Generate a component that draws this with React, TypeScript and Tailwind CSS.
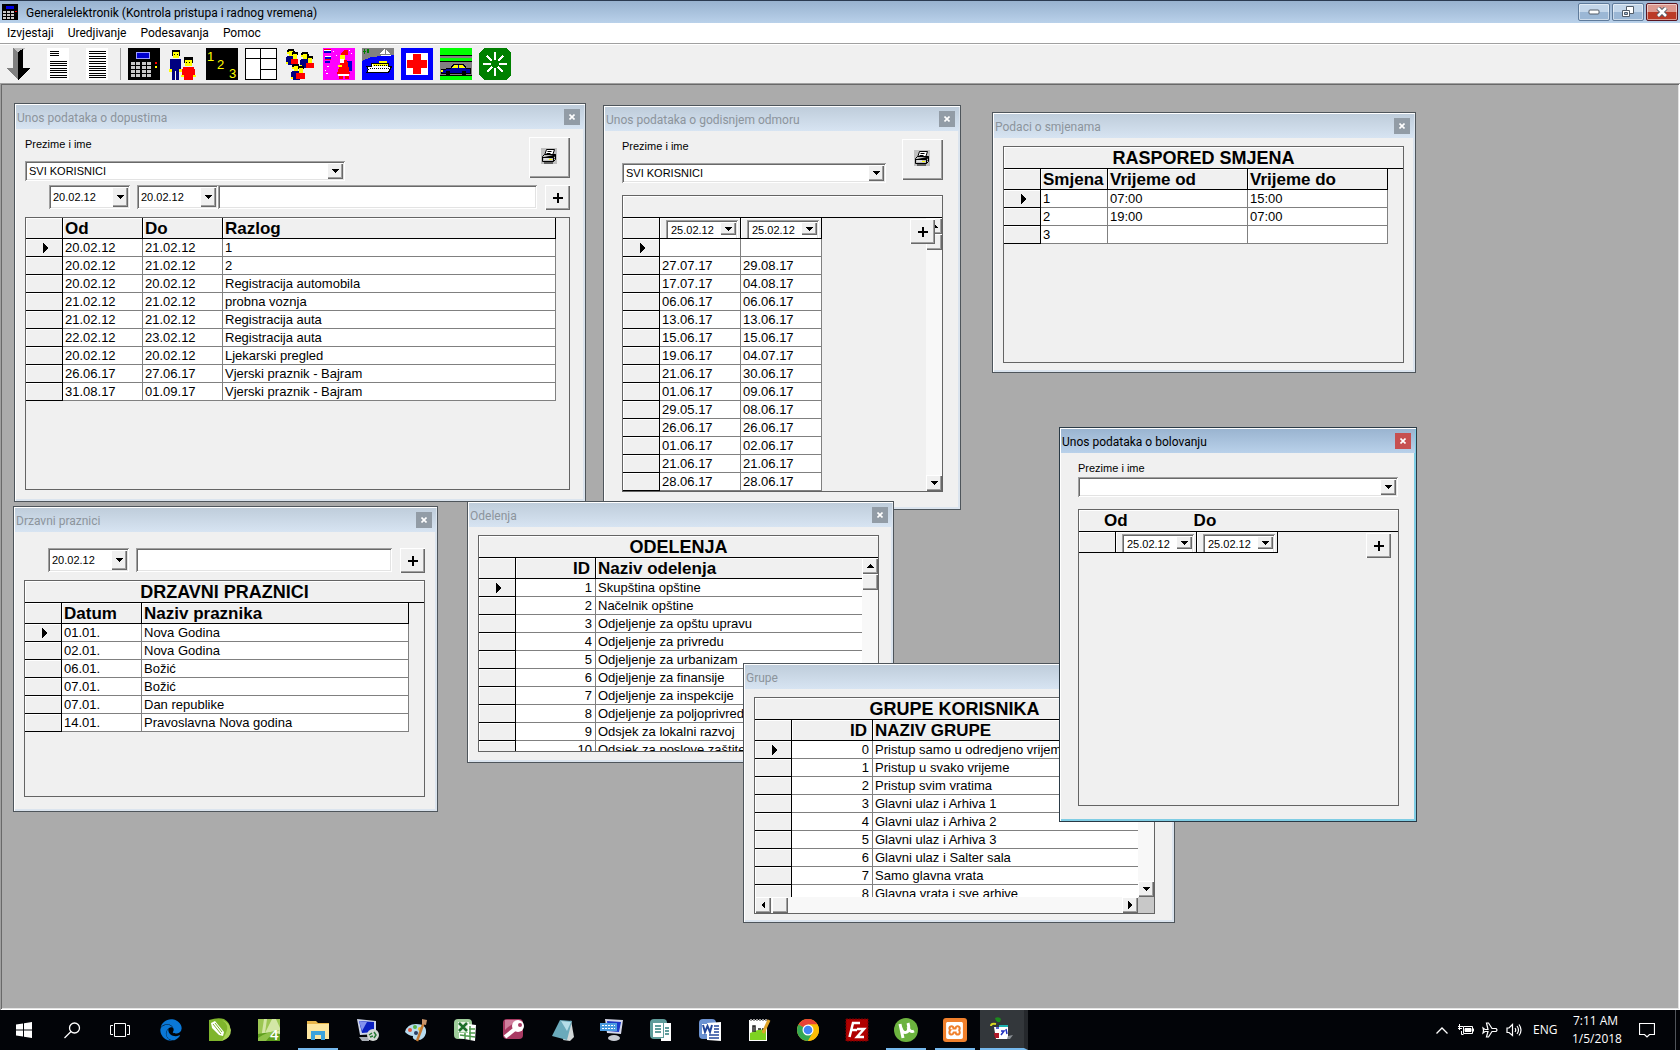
import React, { ReactNode } from "react";
import { FaEdge } from "react-icons/fa";
import { SiXampp } from "react-icons/si";

const sunken =
  "bg-white shadow-[inset_1px_1px_#a0a0a0,inset_-1px_-1px_#ffffff,inset_2px_2px_#696969,inset_-2px_-2px_#e3e3e3]";
const raised =
  "bg-[#f0f0f0] shadow-[inset_1px_1px_#ffffff,inset_-1px_-1px_#696969,inset_-2px_-2px_#a0a0a0]";

const Triangle = ({ dir }: { dir: "up" | "down" | "left" | "right" }) => {
  const points = {
    up: "0,4 7,4 3.5,0",
    down: "0,0 7,0 3.5,4",
    left: "4,0 4,8 0,4",
    right: "0,0 0,8 4,4",
  };
  const tall = dir === "left" || dir === "right";
  return (
    <svg
      width={tall ? 4 : 7}
      height={tall ? 8 : 4}
      shapeRendering="crispEdges"
      aria-hidden="true"
    >
      <polygon points={points[dir]} />
    </svg>
  );
};

type ComboProps = {
  label: string;
  value: string;
  id?: string;
  className?: string;
  small?: boolean;
};

const Combo = ({ label, value, id, className = "", small }: ComboProps) => (
  <div className={`relative flex shrink-0 p-0.5 ${sunken} ${className}`}>
    <select
      id={id}
      aria-label={id ? undefined : label}
      defaultValue={value}
      className={`w-full min-w-0 appearance-none bg-transparent text-[11px] leading-4 outline-none ${
        small ? "pl-[3px]" : "pl-0.5"
      }`}
    >
      <option>{value}</option>
    </select>
    <span
      className={`pointer-events-none absolute right-0.5 top-0.5 flex items-center justify-center ${raised} ${
        small ? "h-[13px] w-4" : "bottom-0.5 w-4"
      }`}
    >
      <Triangle dir="down" />
    </span>
  </div>
);

const PlusButton = ({ className = "" }: { className?: string }) => (
  <button
    type="button"
    aria-label="Dodaj"
    className={`flex size-[25px] shrink-0 items-center justify-center ${raised} ${className}`}
  >
    <svg width="12" height="12" shapeRendering="crispEdges">
      <path d="M5 1h2v10h-2zM1 5h10v2h-10z" />
    </svg>
  </button>
);

const PrintButton = () => (
  <button
    type="button"
    aria-label="Stampaj"
    className={`flex size-[41px] shrink-0 items-center justify-center pb-1 pr-0.5 ${raised}`}
  >
    <svg width="16" height="16" viewBox="0 0 16 16">
      <path fill="#c0c0c0" d="M0 0h16v16H0z" />
      <path fill="#fff" stroke="#000" d="M5.5 1.5h8l-2 6h-8z" />
      <path stroke="#000" d="M6.5 3.5h4M5.5 5.5h4" />
      <path fill="#c0c0c0" stroke="#000" d="M1.5 8.5l2-2h11v5l-2 2h-11z" />
      <path stroke="#000" d="M1.5 9.5h11l2-3M12.5 9.5v4M3 15h9M13.500 10.500l1.500 -1.500" />
      <path fill="#ff0" d="M8 11h3v1H8z" />
      <path fill="#fff" d="M3 10.500h5v1H3z" />
    </svg>
  </button>
);

const ScrollButton = ({ dir }: { dir: "up" | "down" | "left" | "right" }) => (
  <button
    type="button"
    tabIndex={-1}
    aria-label={`Scroll ${dir}`}
    className={`flex size-4 shrink-0 items-center justify-center ${raised}`}
  >
    <Triangle dir={dir} />
  </button>
);

type Column = { label: ReactNode; width: string; right?: boolean };

type DataGridProps = {
  name: string;
  title?: ReactNode;
  columns: Column[];
  rows: string[][];
  vScroll?: boolean;
  hScroll?: boolean;
};

const DataGrid = ({ name, title, columns, rows, vScroll, hScroll }: DataGridProps) => {
  const filled = columns[columns.length - 1].width !== "";
  return (
    <div className="flex min-h-0 flex-1 flex-col overflow-hidden border border-[#646464]">
      {title !== undefined && (
        <div className="h-[22px] shrink-0 border-b border-black text-center text-[18px] font-bold leading-[22px] shadow-[inset_1px_1px_#fff]">
          {title}
        </div>
      )}
      <div className="flex min-h-0 flex-1">
        <div className="min-w-0 flex-1 overflow-hidden">
          <table
            aria-label={name}
            className="w-full table-fixed border-separate border-spacing-0 whitespace-nowrap text-[13px]"
          >
            <thead>
              <tr className="h-[21px] text-[17px] leading-5">
                <td className="w-[37px] border-b border-r border-black p-0 shadow-[inset_1px_1px_#fff]" />
                {columns.map((col, i) => (
                  <th
                    key={i}
                    className={`overflow-hidden border-b border-black p-0 font-bold shadow-[inset_1px_1px_#fff] ${
                      col.width
                    } ${col.width ? "border-r" : ""} ${
                      col.right ? "pr-[5px] text-right" : "pl-0.5 text-left"
                    }`}
                  >
                    {typeof col.label === "string" ? (
                      <div className="pt-0.5 leading-[18px]">{col.label}</div>
                    ) : (
                      col.label
                    )}
                  </th>
                ))}
                {filled && <td className="p-0" />}
              </tr>
            </thead>
            <tbody>
              {rows.map((row, r) => (
                <tr key={r} className="h-[18px] leading-[17px]">
                  <td className="border-b border-r border-black p-0 shadow-[inset_1px_1px_#fff]">
                    {r === 0 && (
                      <svg width="36" height="10" className="block" shapeRendering="crispEdges">
                        <path d="M17 0l5 5l-5 5z" />
                      </svg>
                    )}
                  </td>
                  {row.map((cell, c) => (
                    <td
                      key={c}
                      className={`overflow-hidden border-b border-[#808080] bg-white p-0 ${
                        columns[c].width ? "border-r" : ""
                      } ${columns[c].right ? "pr-[3px] text-right" : "pl-0.5"}`}
                    >
                      {cell}
                    </td>
                  ))}
                  {filled && <td className="p-0" />}
                </tr>
              ))}
            </tbody>
          </table>
        </div>
        {vScroll && (
          <div className="flex w-4 shrink-0 flex-col bg-[#f8f8f8]">
            <ScrollButton dir="up" />
            <div className={`h-4 shrink-0 ${raised}`} />
            <div className="flex-1" />
            <ScrollButton dir="down" />
          </div>
        )}
      </div>
      {hScroll && (
        <div className="flex h-4 shrink-0 bg-[#f8f8f8]">
          <ScrollButton dir="left" />
          <div className={`ml-px w-4 ${raised}`} />
          <div className="flex-1" />
          <ScrollButton dir="right" />
          <div className="w-4 bg-[#c8c8c8]" />
        </div>
      )}
    </div>
  );
};

type ChildWindowProps = {
  title: string;
  place: string;
  body: string;
  active?: boolean;
  children: ReactNode;
};

const ChildWindow = ({ title, place, body, active, children }: ChildWindowProps) => (
  <section
    aria-label={title}
    className={`absolute flex flex-col border bg-[#f0f0f0] p-px ${place} ${
      active
        ? "border-[#2a3a46] shadow-[inset_1px_1px_#fff,inset_-2px_-2px_#7fcde4]"
        : "border-[#4e555b] shadow-[inset_1px_1px_#fff,inset_-2px_-2px_#dbe4ee]"
    }`}
  >
    <div
      className={`flex h-6 shrink-0 items-center justify-between bg-linear-to-b pl-px pr-1 ${
        active
          ? "from-[#9ab4d0] to-[#b9d1ea] text-black"
          : "from-[#bfcddb] to-[#d7e4f2] text-[#8c949c]"
      }`}
    >
      <h2 className="pt-0.5 font-['Roboto',sans-serif] text-[12px] leading-4">{title}</h2>
      <button
        type="button"
        aria-label="Zatvori"
        className={`flex size-4 items-center justify-center ${
          active ? "bg-[#c75050]" : "bg-[#929ca6]"
        }`}
      >
        <svg width="6" height="6" viewBox="0 0 6 6" className="block">
          <path d="M0.500 0.500l5 5M5.500 0.500l-5 5" stroke="#fff" strokeWidth="1.600" />
        </svg>
      </button>
    </div>
    <div className={`relative flex min-h-0 flex-1 flex-col ${body}`}>{children}</div>
  </section>
);

const HeaderDate = ({ label }: { label: string }) => (
  <div className="h-5 overflow-hidden pl-1 pt-0.5 font-normal">
    <Combo small label={label} value="25.02.12" className="h-5 w-[72px]" />
  </div>
);

const dateColumns: Column[] = [
  { label: <HeaderDate label="Od" />, width: "w-[81px]" },
  { label: <HeaderDate label="Do" />, width: "w-[81px]" },
];

const leaves = [
  ["20.02.12", "21.02.12", "1"],
  ["20.02.12", "21.02.12", "2"],
  ["20.02.12", "20.02.12", "Registracija automobila"],
  ["21.02.12", "21.02.12", "probna voznja"],
  ["21.02.12", "21.02.12", "Registracija auta"],
  ["22.02.12", "23.02.12", "Registracija auta"],
  ["20.02.12", "20.02.12", "Ljekarski pregled"],
  ["26.06.17", "27.06.17", "Vjerski praznik - Bajram"],
  ["31.08.17", "01.09.17", "Vjerski praznik - Bajram"],
];

const vacations = [
  ["", ""],
  ["27.07.17", "29.08.17"],
  ["17.07.17", "04.08.17"],
  ["06.06.17", "06.06.17"],
  ["13.06.17", "13.06.17"],
  ["15.06.17", "15.06.17"],
  ["19.06.17", "04.07.17"],
  ["21.06.17", "30.06.17"],
  ["01.06.17", "09.06.17"],
  ["29.05.17", "08.06.17"],
  ["26.06.17", "26.06.17"],
  ["01.06.17", "02.06.17"],
  ["21.06.17", "21.06.17"],
  ["28.06.17", "28.06.17"],
];

const shifts = [
  ["1", "07:00", "15:00"],
  ["2", "19:00", "07:00"],
  ["3", "", ""],
];

const holidays = [
  ["01.01.", "Nova Godina"],
  ["02.01.", "Nova Godina"],
  ["06.01.", "Božić"],
  ["07.01.", "Božić"],
  ["07.01.", "Dan republike"],
  ["14.01.", "Pravoslavna Nova godina"],
];

const departments = [
  ["1", "Skupština opštine"],
  ["2", "Načelnik opštine"],
  ["3", "Odjeljenje za opštu upravu"],
  ["4", "Odjeljenje za privredu"],
  ["5", "Odjeljenje za urbanizam"],
  ["6", "Odjeljenje za finansije"],
  ["7", "Odjeljenje za inspekcije"],
  ["8", "Odjeljenje za poljoprivredu"],
  ["9", "Odsjek za lokalni razvoj"],
  ["10", "Odsjek za poslove zaštite"],
];

const groups = [
  ["0", "Pristup samo u odredjeno vrijeme"],
  ["1", "Pristup u svako vrijeme"],
  ["2", "Pristup svim vratima"],
  ["3", "Glavni ulaz i Arhiva 1"],
  ["4", "Glavni ulaz i Arhiva 2"],
  ["5", "Glavni ulaz i Arhiva 3"],
  ["6", "Glavni ulaz i Salter sala"],
  ["7", "Samo glavna vrata"],
  ["8", "Glavna vrata i sve arhive"],
];

const Tool = ({ name, children }: { name: string; children: ReactNode }) => (
  <button type="button" aria-label={name} className="shrink-0">
    <svg width="32" height="32" viewBox="0 0 32 32" className="block" shapeRendering="crispEdges">
      {children}
    </svg>
  </button>
);

const Person = ({ x, y, fill }: { x: number; y: number; fill: string }) => (
  <g transform={`translate(${x} ${y})`}>
    <path fill="#000" d="M1 0h6v2h1v3H0V1h1z" />
    <path fill="#ff0" d="M2 2h4v5H2z" />
    <path fill={fill} d="M0 7h8v1h2v6H8v2H1v-2h-2V8h1z" />
    <path fill="#ff0" d="M-1 13h2v2h-2zM8 13h2v2H8zM0 3h2v2H0z" />
  </g>
);

const Toolbar = () => (
  <div className="flex h-10 shrink-0 items-center gap-[7px] border-t border-[#a0a0a0] bg-[#f0f0f0] pl-[3px] shadow-[inset_0_1px_#fff]">
    <Tool name="Izlaz">
      <path fill="#c0c0c0" d="M10 0h12l-4 4h-4z" />
      <path fill="#808080" d="M10 0l5 4v28L3 20h7z" />
      <path fill="#000" d="M20 1l-5 3v28L27 20h-7z" />
    </Tool>
    <Tool name="Izvjestaj">
      <path fill="#fff" d="M5 0h22v32H5z" />
      <path stroke="#000" d="M8 3.500h9M8 5.500h9M8 7.500h9M8 13.500h17M8 15.500h17M8 17.500h17M8 20.500h17M8 22.500h17M8 24.500h17M8 27.500h17M8 29.500h17" />
    </Tool>
    <Tool name="Lista">
      <path fill="#fff" d="M5 0h22v32H5z" />
      <path stroke="#000" d="M8 3.500h17M8 5.500h17M8 8.500h17M8 10.500h17M8 13.500h17M8 15.500h17M8 18.500h17M8 20.500h17M8 22.500h17M8 25.500h17M8 27.500h17M8 29.500h17" />
    </Tool>
    <div className="h-8 w-px bg-[#a0a0a0]" />
    <Tool name="Terminal">
      <path d="M0 0h32v32H0z" />
      <path fill="#0000d0" stroke="#a0a0ff" d="M8.500 4.500h13v6h-13z" />
      <path stroke="#c8c8c8" strokeWidth="3" strokeDasharray="4 1.300" d="M3 15.500h20M3 19.500h20M3 23.500h20M3 27h20" />
      <path fill="#f00" d="M27 14h2v2h-2z" />
      <path fill="#ff0" d="M27 18h2v2h-2z" />
    </Tool>
    <Tool name="Korisnici">
      <path fill="#000080" d="M3 11h11v12h-2v9H9v-9H8v9H5v-9H3z" />
      <path fill="#000" d="M5 2h8v6H5zM17 9h9v6h-9z" />
      <path fill="#ff0" d="M6 4h6v6H6zM2 21h3v3H2zM12 21h3v3h-3zM18 12h7v6h-7z" />
      <path fill="#000" d="M7 6h1v1H7zM10 6h1v1h-1zM19 14h1v1h-1zM22 14h1v1h-1z" />
      <path fill="#f00" d="M16 19h11v2h1v8h-2v3h-9v-3h-2v-8h1z" />
      <path fill="#ff0" d="M14 27h3v2h-3zM26 27h3v2h-3z" />
    </Tool>
    <Tool name="Brojevi">
      <path d="M0 0h32v32H0z" />
      <g fill="#ff0" className="font-['Liberation_Sans',sans-serif] text-[13px]">
        <text x="1" y="13">1</text>
        <text x="11" y="21">2</text>
        <text x="23" y="30">3</text>
      </g>
    </Tool>
    <Tool name="Raspored">
      <path fill="#fff" stroke="#000" d="M.5.500h31v31H.5zM.5 10.500h31M15.500.500v31M15.500 21.500h16" />
    </Tool>
    <Tool name="Grupe">
      <Person x={3} y={1} fill="#000080" />
      <Person x={17} y={4} fill="#000080" />
      <Person x={8} y={16} fill="#000080" />
      <path fill="#000" d="M8 4h6v3H8zM23 8h6v3h-6zM14 18h6v3h-6z" />
      <path fill="#ff0" d="M9 6h4v5H9zM24 10h4v5h-4zM15 20h4v5h-4z" />
      <path fill="#f00" d="M7 11h7v5H7zM22 15h8v5h-8zM12 25h9v6h-9z" />
    </Tool>
    <Tool name="Praznici">
      <path fill="#f0f" d="M0 0h32v32H0z" />
      <path fill="#0000d0" d="M1 3h7v2H1zM2 9h6v2H2zM2 13h5v2H2zM24 13h5v10h-4z" />
      <path fill="#fff" d="M1 2h7v1H1zM2 8h6v1H2zM10 3h1v1h-1zM13 7h1v1h-1zM28 5h1v1h-1zM26 2h1v1h-1zM4 18h2v1H4zM3 25h2v1H3zM2 22h1v1H2z" />
      <path fill="#f00" d="M1 1h7v1H1zM2 11h6v1H2zM18 5l3-3h4v5h-7zM18 12h6l3 14H14z" />
      <path fill="#fff" d="M15 26h11v2H15z" />
      <path fill="#ff0" d="M17 7h5v5h-5zM15 17h4v2h-4z" />
      <path fill="#fff" d="M17 11h4v4h-4z" />
      <path fill="#f00" d="M16 28h4v3h-4zM22 28h4v3h-4z" />
    </Tool>
    <Tool name="Odmor">
      <path fill="#00f" d="M0 0h32v32H0z" />
      <path fill="#808080" d="M0 0h32v7H21l-8 2H9l-9 4z" />
      <path fill="#008000" d="M1 3h3v1H1zM2 1h1v5H2zM5 1h2v4H5z" />
      <path fill="#fff" d="M23 0v6h-5zM24 1l4 5h-4zM18 7h12l-2 1h-8z" />
      <path stroke="#000" fill="#fff" d="M4.500 18.500h5v-3h17v3h3l-3 6h-22l2-3z" />
      <path fill="#ff0" d="M11 16h15v2H11zM17 13h8v2h-8z" />
      <path stroke="#000" strokeDasharray="1 1" d="M8 20.500h19M12 17.500h14" />
    </Tool>
    <Tool name="Bolovanje">
      <path fill="#00f" d="M0 0h32v32H0z" />
      <path fill="#fff" d="M5 5h22v22H5z" />
      <path fill="#f00" d="M12 6h8v6h6v8h-6v6h-8v-6H6v-8h6z" />
    </Tool>
    <Tool name="Sluzbeni put">
      <path fill="#0f0" d="M0 0h32v32H0z" />
      <path fill="#808080" d="M0 7h32v3H0zM0 14h32v14H0z" />
      <path stroke="#000" d="M0 7.500h32M0 13.500h32M0 27.500h32" />
      <path fill="#0000a0" stroke="#000" d="M1.500 25.500v-4l9-1 3-4h10l3 4h4v5z" />
      <path fill="#ff0" d="M14 17h4v3h-6zM19 17h4l2 3h-6zM1 22h2v2H1z" />
      <circle cx="8" cy="25" r="2.500" />
      <circle cx="24" cy="25" r="2.500" />
    </Tool>
    <Tool name="Osvjezi">
      <path fill="#008000" d="M5 0h22l5 5v22l-5 5H5l-5-5V5z" />
      <path
        stroke="#fff"
        strokeWidth="2"
        d="M16 4v8M16 20v8M4 16h8M20 16h8M8 8l5 5M19 19l5 5M24 8l-5 5M13 19l-5 5"
      />
    </Tool>
  </div>
);

const caption =
  "flex h-[18px] w-8 items-center justify-center rounded-[2px] border shadow-[inset_0_0_0_1px_rgba(255,255,255,0.5)]";

const TitleBar = () => (
  <header className="flex h-[23px] shrink-0 items-center border-t border-[#2b3a50] bg-linear-to-b from-[#98b2cf] to-[#b9d1ea] pl-0.5 pr-0.5">
    <svg width="16" height="16" viewBox="0 0 16 16" shapeRendering="crispEdges">
      <path d="M0 0h16v16H0z" />
      <path fill="#0000e0" d="M4 2h8v3H4z" />
      <path stroke="#c8c8c8" strokeWidth="2" strokeDasharray="3 1" d="M1 8h11M1 11h11M1 14h11" />
      <path fill="#f00" d="M13 7h2v1h-2z" />
    </svg>
    <h1 className="ml-2 flex-1 pt-0.5 font-['Roboto',sans-serif] text-[12px] leading-4">
      Generalelektronik (Kontrola pristupa i radnog vremena)
    </h1>
    <div className="flex gap-0.5">
      <button
        type="button"
        aria-label="Minimize"
        className={`border-[#5f7b9b] bg-linear-to-b from-[#c3d6ea] from-50% to-[#9bb7d5] to-50% ${caption}`}
      >
        <svg width="12" height="6">
          <rect x="1" y="1" width="10" height="4" rx="1" fill="#fff" stroke="#525c68" />
        </svg>
      </button>
      <button
        type="button"
        aria-label="Restore"
        className={`border-[#5f7b9b] bg-linear-to-b from-[#c3d6ea] from-50% to-[#9bb7d5] to-50% ${caption}`}
      >
        <svg width="12" height="12" fill="#fff" stroke="#525c68">
          <path d="M4.500.500h7v7h-7z" />
          <path d="M.5 4.500h7v6h-7z" />
          <path d="M2.500 6.500h3v2h-3z" fill="#9bb7d5" />
        </svg>
      </button>
      <button
        type="button"
        aria-label="Close"
        className={`border-[#5a1420] bg-linear-to-b from-[#dc9a90] from-50% to-[#bb3a26] to-50% ${caption}`}
      >
        <svg width="12" height="10" viewBox="0 0 12 10">
          <path d="M2 1l8 8M10 1l-8 8" stroke="#525c68" strokeWidth="4.500" />
          <path d="M2 1l8 8M10 1l-8 8" stroke="#fff" strokeWidth="2.500" />
        </svg>
      </button>
    </div>
  </header>
);

type AppIcon = { name: string; running?: boolean; icon: ReactNode };

const sv = (children: ReactNode) => (
  <svg width="24" height="24" viewBox="0 0 24 24" aria-hidden="true">
    {children}
  </svg>
);

const apps: AppIcon[] = [
  { name: "Edge", icon: <FaEdge size={22} color="#0a78d7" /> },
  {
    name: "CorelDRAW",
    icon: sv(
      <>
        <path fill="#7fb52c" d="M1 2q9-3 15-1 7 4 6 11-2 7-8 11H1z" />
        <path fill="#a9d255" d="M14 2q8 5 4 13l-4 8q9-3 9-11-2-8-9-10z" />
        <path fill="#fff" d="M3 5l4-2 9 11-1 4-4-1L4 10z" />
        <path stroke="#7fb52c" d="M5 6l8 10M7 5l7 9" />
      </>
    ),
  },
  {
    name: "Corel 4",
    icon: sv(
      <>
        <path fill="#d3e6a6" d="M1 1h22v22H1z" />
        <path fill="#9cc653" d="M1 1h6l-3 20H1zM10 1h5L8 15zM19 1h4v9z" />
        <path fill="#5d9e1d" d="M1 16q12-3 22 0v7H1z" />
        <path fill="#8fc249" d="M1 20q10-7 22-8-9 4-14 11H1z" />
        <text x="13" y="22" fill="#fff" className="font-['Open_Sans',sans-serif] text-[15px] font-semibold">4</text>
      </>
    ),
  },
  {
    name: "Explorer",
    running: true,
    icon: sv(
      <>
        <path fill="#e8b64c" d="M1 3h9l2 2h11v3H1z" />
        <path fill="#fce6a0" d="M1 6h22v15H1z" />
        <path fill="#3ba3dc" d="M5 13h14v9h-4v-5H9v5H5z" />
      </>
    ),
  },
  {
    name: "Remote",
    icon: sv(
      <>
        <path fill="#cdd5ea" d="M2 1l19 2v13l-16 1z" />
        <path fill="#0a1fc0" d="M4 3l15 1v10l-12 1z" />
        <path fill="#8392ee" d="M4 3l8 1-5 9z" />
        <path fill="#a8adb5" d="M4 19h10v4H7z" />
        <circle cx="18" cy="17" r="6" fill="#d5d9d5" />
        <path d="M14 17l3-2M15 19l3-1M19 14l2 3-2 3" stroke="#287a34" strokeWidth="1.500" fill="none" />
      </>
    ),
  },
  {
    name: "Paint",
    icon: sv(
      <>
        <path fill="#b7dcf0" d="M1 14Q3 6 12 6q11 0 10 9-2 8-10 7-4-1-3-4-4 0-8-4z" />
        <circle cx="6" cy="12" r="2" fill="#e2573a" />
        <circle cx="11" cy="9" r="2" fill="#58b44a" />
        <circle cx="16" cy="11" r="2" fill="#f0c22b" />
        <circle cx="12" cy="15" r="2" fill="#2b3f63" />
        <path stroke="#c47a33" strokeWidth="2.500" d="M20 4l-7 19" />
        <path fill="#c8946a" d="M18 1l5 1-1 5-4-1z" />
      </>
    ),
  },
  {
    name: "Excel",
    icon: sv(
      <>
        <rect x="1" y="1" width="18" height="20" rx="4" fill="#9fce9b" />
        <path fill="#e9f5e7" d="M5 4h11v10H5z" />
        <path fill="#fff" d="M15 6l8 1-1 16-16-3v-5h9z" />
        <path stroke="#4d9a4b" strokeWidth="1.500" d="M7 17l15 2M12 15v6M17 8v14M16 11h6M16 15h6" />
        <path stroke="#1d6f2b" strokeWidth="2.500" d="M6 5l8 8M14 5l-8 8" />
      </>
    ),
  },
  {
    name: "Access",
    icon: sv(
      <>
        <rect x="1" y="1" width="20" height="20" rx="4" fill="#a83a62" />
        <path fill="#d07f9d" d="M3 2h15q-8 3-15 10z" />
        <circle cx="16" cy="8" r="6" fill="#fff" />
        <circle cx="18" cy="7" r="2" fill="#a83a62" />
        <path stroke="#fff" strokeWidth="4" d="M13 11l-10 8" />
      </>
    ),
  },
  {
    name: "Notepad",
    icon: sv(
      <>
        <path fill="#d2d8d8" d="M20 2l3 17-4 4-7-1z" />
        <path fill="#6aaabb" d="M9 2l12 1-5 19L1 18z" />
        <path fill="#b5dde8" d="M10 3l10 1-4 9z" />
      </>
    ),
  },
  {
    name: "Monitor",
    icon: sv(
      <>
        <path fill="#d5d8ea" d="M5 1l18 1-2 14-14-1z" />
        <path fill="#1c39c8" d="M7 3l14 1-2 10-11-1z" />
        <path fill="#4a9be0" d="M0 5h17v8H0z" />
        <path stroke="#fff" strokeDasharray="2 1" d="M2 7.500h13M2 10.500h13" />
        <ellipse cx="14" cy="20" rx="6" ry="3" fill="#c8ccd4" />
      </>
    ),
  },
  {
    name: "Publisher",
    icon: sv(
      <>
        <rect x="1" y="1" width="17" height="20" rx="4" fill="#5f9c9b" />
        <path fill="#fff" d="M4 5h10v14H4zM15 5h7v18H12v-3h3z" />
        <path stroke="#2d7e7c" strokeWidth="1.500" d="M6 8h6M6 11h6M6 14h6M16 10h4M16 13h4M16 16h4" />
      </>
    ),
  },
  {
    name: "Word",
    icon: sv(
      <>
        <rect x="1" y="1" width="17" height="20" rx="4" fill="#6c93d2" />
        <path fill="#fff" d="M9 5l14-1v19l-14-1zM4 6h11v10H4z" />
        <path stroke="#23479b" strokeWidth="1.500" d="M11 17h10M11 20h10M16 8h5M16 11h5M16 14h5" />
        <path stroke="#23479b" strokeWidth="2" fill="none" d="M5 7l2 7 2.500-6 2.500 6 2-7" />
      </>
    ),
  },
  {
    name: "Notepad++",
    icon: sv(
      <>
        <path fill="#fff" d="M2 2h18v21H2z" />
        <path fill="#7ed321" d="M3 15q8-4 16-4v11H3z" />
        <path stroke="#999" strokeWidth="2" strokeDasharray="2 1" d="M3 2h17" />
        <path stroke="#222" strokeWidth="1.500" d="M6 14V8h2v6M11 11h3M15 11h3" fill="none" />
        <path stroke="#e0a52a" strokeWidth="3" d="M22 2l-6 13" />
      </>
    ),
  },
  {
    name: "Chrome",
    icon: sv(
      <>
        <circle cx="12" cy="12" r="11" fill="#fbbc05" />
        <path fill="#ea4335" d="M12 12L2.500 6.500A11 11 0 0121.500 6.500H12z" />
        <path fill="#34a853" d="M12 12l-9.500-5.500A11 11 0 0012 23l4.800-8.200z" />
        <path fill="#fbbc05" d="M12 6.500h9.500A11 11 0 0112 23l4.800-8.200z" />
        <circle cx="12" cy="12" r="5.500" fill="#fff" />
        <circle cx="12" cy="12" r="4.300" fill="#4285f4" />
      </>
    ),
  },
  {
    name: "FileZilla",
    icon: sv(
      <>
        <path fill="#b00000" stroke="#700" strokeDasharray="2 1" d="M1 1h22v22H1z" />
        <path stroke="#fff" strokeWidth="2.500" fill="none" d="M15 5H8L4.500 19M6 12h6M12 11h7l-7 8h7" />
      </>
    ),
  },
  {
    name: "uTorrent",
    running: true,
    icon: sv(
      <>
        <circle cx="12" cy="12" r="12" fill="#6cb33f" />
        <path
          stroke="#fff"
          strokeWidth="3"
          fill="none"
          d="M6 6l3 14M7 10q2 6 6 4 3-2 1-9M14 9q2 6 6 4"
        />
      </>
    ),
  },
  {
    name: "XAMPP",
    running: true,
    icon: (
      <span className="flex size-6 items-center justify-center rounded-[3px] bg-[#f0802c]">
        <SiXampp size={17} color="#fff" />
      </span>
    ),
  },
];

const Taskbar = () => (
  <footer className="flex h-10 shrink-0 items-stretch bg-[#020408] font-['Open_Sans',sans-serif] text-[12px] text-white">
    <button type="button" aria-label="Start" className="flex w-12 items-center justify-center">
      <svg width="16" height="16" fill="#fff">
        <path d="M0 2.500L7 1.500V7.500H0zM8 1.300L16 0V7.500H8zM0 8.500H7V14.500L0 13.500zM8 8.500H16V16L8 14.700z" />
      </svg>
    </button>
    <button type="button" aria-label="Search" className="flex w-12 items-center justify-center">
      <svg width="17" height="17" fill="none" stroke="#fff" strokeWidth="1.300">
        <circle cx="10.500" cy="6" r="5" />
        <path d="M7 9.500L.5 16" />
      </svg>
    </button>
    <button type="button" aria-label="Task view" className="flex w-12 items-center justify-center">
      <svg width="20" height="14" fill="none" stroke="#fff">
        <path d="M4.500.500h11v13h-11zM3 2.500H.5v9H3M17 2.500h2.500v9H17" />
      </svg>
    </button>
    <div className="ml-0.5 mr-px flex">
      {apps.map((app) => (
        <button
          key={app.name}
          type="button"
          aria-label={app.name}
          className="relative flex w-[49px] items-center justify-center"
        >
          {app.icon}
          {app.running && <span className="absolute bottom-0 h-0.5 w-10 bg-[#76b9ed]" />}
        </button>
      ))}
    </div>
    <button
      type="button"
      aria-label="Generalelektronik"
      className="flex w-12 items-center justify-center border-b-2 border-r-4 border-b-[#76b9ed] border-r-[#25282c] bg-[#33373b]"
    >
      <svg width="24" height="24" viewBox="0 0 24 24">
        <path fill="#1d8a1d" d="M5 1q4-2 6 1l-1 3q-4 1-5-4z" />
        <path stroke="#d8d820" strokeWidth="2" fill="none" d="M1 9q0-3 5-2" />
        <path fill="#fff" d="M4 10l14 0v12H6z" />
        <path stroke="#2232c0" strokeWidth="1.500" fill="none" d="M11 14h3l-3 4M16 12l1 5M6 11h3" />
        <path stroke="#1bb2b2" strokeWidth="2" d="M9 9h9" />
        <path fill="#b01828" d="M4 16h5v5H5z" />
        <path fill="#8a8f94" d="M18 19l5-1-3 4h-3z" />
      </svg>
    </button>
    <div className="ml-auto flex items-center">
      <svg width="12" height="7" fill="none" stroke="#fff" strokeWidth="1.300" className="mr-2.5">
        <path d="M.5 6.500L6 1l5.500 5.500" />
      </svg>
      <svg width="16" height="12" className="mr-2" fill="none" stroke="#fff">
        <path d="M5.500 2.500h9v7h-9zM15.500 4.500v3M0 2.500h5M0 4.500h4M1.500 0v6M3.500 7v3.500h2" />
        <path fill="#fff" d="M7 4.500h6v3H7z" />
      </svg>
      <svg width="16" height="16" className="mr-2" fill="none" stroke="#fff" strokeWidth="1.200">
        <path d="M1 6l2 1.500h3L4.500 1h2L10 6.500h4q2 1.500 0 3h-4L6.500 15h-2L6 9.500H3L1 11l.5-2.500z" />
      </svg>
      <svg width="17" height="14" className="mr-2.5" fill="none" stroke="#fff" strokeWidth="1.200">
        <path d="M1 5h2l3.500-3.500v11L3 9.500H1zM9 5q1.500 2 0 4M11 3q3 4 0 8M13 1.500q4 5.500 0 11" />
      </svg>
      <span className="w-[23px] text-center">ENG</span>
      <div className="ml-4 w-[47px] whitespace-nowrap text-center leading-[18px]">
        <p>7:11 AM</p>
        <p>1/5/2018</p>
      </div>
      <svg width="16" height="16" className="ml-5" fill="none" stroke="#fff" strokeWidth="1.200">
        <path d="M.5 1.500h15v11h-5L8 15l-2.500-2.500h-5z" />
      </svg>
      <span className="ml-5 mr-1 h-10 w-px bg-[#50545a]" />
    </div>
  </footer>
);

export default function App() {
  return (
    <div className="flex h-screen flex-col overflow-hidden bg-[#f0f0f0] font-['Liberation_Sans',Arial,sans-serif] text-black">
      <TitleBar />
      <nav className="flex h-5 shrink-0 items-center gap-[14px] bg-white pl-[7px] font-['Roboto',sans-serif] text-[12px] leading-4">
        <a href="#izvjestaji">Izvjestaji</a>
        <a href="#uredjivanje">Uredjivanje</a>
        <a href="#podesavanja">Podesavanja</a>
        <a href="#pomoc">Pomoc</a>
      </nav>
      <Toolbar />
      <main className="relative min-h-0 flex-1 overflow-hidden bg-[#ababab] shadow-[inset_1px_1px_#a0a0a0,inset_-1px_-1px_#fff,inset_2px_2px_#696969,inset_-2px_-2px_#e3e3e3]">
        <ChildWindow
          title="Unos podataka o dopustima"
          place="left-[14px] top-[20px] h-[399px] w-[572px]"
          body="pb-2.5 pl-[9px] pr-3.5 pt-2"
        >
          <div className="flex justify-between">
            <div className="w-80">
              <label htmlFor="dopust-ime" className="mb-2.5 block text-[11px] leading-[14px]">
                Prezime i ime
              </label>
              <Combo id="dopust-ime" label="Prezime i ime" value="SVI KORISNICI" className="h-5" />
            </div>
            <PrintButton />
          </div>
          <div className="mb-[7px] mt-1 flex pl-6">
            <Combo label="Od" value="20.02.12" className="mr-[7px] h-6 w-[81px]" />
            <Combo label="Do" value="20.02.12" className="h-6 w-[81px]" />
            <input aria-label="Razlog" className={`mr-2 h-6 min-w-0 flex-1 px-1 text-[11px] ${sunken}`} />
            <PlusButton />
          </div>
          <DataGrid
            name="Dopusti"
            columns={[
              { label: "Od", width: "w-[80px]" },
              { label: "Do", width: "w-[80px]" },
              { label: "Razlog", width: "w-[333px]" },
            ]}
            rows={leaves}
          />
        </ChildWindow>

        <ChildWindow
          title="Unos podataka o godisnjem odmoru"
          place="left-[603px] top-[22px] h-[405px] w-[358px]"
          body="pb-4 pl-[17px] pr-4 pt-2"
        >
          <div className="mb-3 flex justify-between">
            <div className="w-[264px]">
              <label htmlFor="odmor-ime" className="mb-2.5 block text-[11px] leading-[14px]">
                Prezime i ime
              </label>
              <Combo id="odmor-ime" label="Prezime i ime" value="SVI KORISNICI" className="h-5" />
            </div>
            <PrintButton />
          </div>
          <DataGrid name="Godisnji odmor" title="" columns={dateColumns} rows={vacations} vScroll />
          <PlusButton className="absolute right-6 top-[88px]" />
        </ChildWindow>

        <ChildWindow
          title="Podaci o smjenama"
          place="left-[992px] top-[29px] h-[261px] w-[424px]"
          body="pb-2 pl-[9px] pr-2.5 pt-2"
        >
          <DataGrid
            name="Raspored smjena"
            title="RASPORED SMJENA"
            columns={[
              { label: "Smjena", width: "w-[67px]" },
              { label: "Vrijeme od", width: "w-[140px]" },
              { label: "Vrijeme do", width: "w-[140px]" },
            ]}
            rows={shifts}
          />
        </ChildWindow>

        <ChildWindow
          title="Drzavni praznici"
          place="left-[13px] top-[423px] h-[306px] w-[425px]"
          body="pb-[13px] pl-[9px] pr-[11px] pt-4"
        >
          <div className="mb-[7px] flex pl-6">
            <Combo label="Datum" value="20.02.12" className="mr-[7px] h-6 w-[81px]" />
            <input
              aria-label="Naziv praznika"
              className={`mr-2 h-6 min-w-0 flex-1 px-1 text-[11px] ${sunken}`}
            />
            <PlusButton />
          </div>
          <DataGrid
            name="Drzavni praznici"
            title="DRZAVNI PRAZNICI"
            columns={[
              { label: "Datum", width: "w-[80px]" },
              { label: "Naziv praznika", width: "w-[267px]" },
            ]}
            rows={holidays}
          />
        </ChildWindow>

        <ChildWindow
          title="Odelenja"
          place="left-[467px] top-[418px] h-[262px] w-[427px]"
          body="pb-[9px] pl-[9px] pr-[13px] pt-2"
        >
          <DataGrid
            name="Odelenja"
            title="ODELENJA"
            columns={[
              { label: "ID", width: "w-[80px]", right: true },
              { label: "Naziv odelenja", width: "" },
            ]}
            rows={departments}
            vScroll
          />
        </ChildWindow>

        <ChildWindow
          title="Grupe"
          place="left-[743px] top-[580px] h-[260px] w-[432px]"
          body="pb-[7px] pl-[9px] pr-[18px] pt-2"
        >
          <DataGrid
            name="Grupe korisnika"
            title="GRUPE KORISNIKA"
            columns={[
              { label: "ID", width: "w-[81px]", right: true },
              { label: "NAZIV GRUPE", width: "" },
            ]}
            rows={groups}
            vScroll
            hScroll
          />
        </ChildWindow>

        <ChildWindow
          active
          title="Unos podataka o bolovanju"
          place="left-[1059px] top-[344px] h-[395px] w-[358px]"
          body="pb-3.5 pl-[17px] pr-4 pt-2"
        >
          <label htmlFor="bolovanje-ime" className="mb-0.5 block text-[11px] leading-[14px]">
            Prezime i ime
          </label>
          <Combo id="bolovanje-ime" label="Prezime i ime" value="" className="mb-3 h-5 w-80" />
          <DataGrid
            name="Bolovanje"
            title={
              <div className="flex gap-[66px] pl-[25px] text-[17px]">
                <span>Od</span>
                <span>Do</span>
              </div>
            }
            columns={dateColumns}
            rows={[]}
          />
          <PlusButton className="absolute right-6 top-20" />
        </ChildWindow>
      </main>
      <Taskbar />
    </div>
  );
}
